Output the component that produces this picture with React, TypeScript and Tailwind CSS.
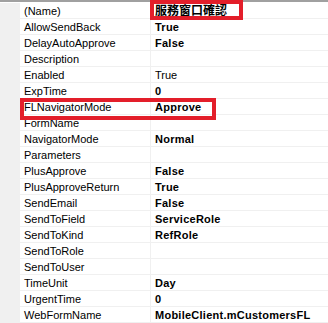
import React from "react";

type Prop = { name: string; value?: string; bold?: boolean };

const props: Prop[] = [
  { name: "(Name)", value: "服務窗口確認", bold: true },
  { name: "AllowSendBack", value: "True", bold: true },
  { name: "DelayAutoApprove", value: "False", bold: true },
  { name: "Description" },
  { name: "Enabled", value: "True" },
  { name: "ExpTime", value: "0", bold: true },
  { name: "FLNavigatorMode", value: "Approve", bold: true },
  { name: "FormName" },
  { name: "NavigatorMode", value: "Normal", bold: true },
  { name: "Parameters" },
  { name: "PlusApprove", value: "False", bold: true },
  { name: "PlusApproveReturn", value: "True", bold: true },
  { name: "SendEmail", value: "False", bold: true },
  { name: "SendToField", value: "ServiceRole", bold: true },
  { name: "SendToKind", value: "RefRole", bold: true },
  { name: "SendToRole" },
  { name: "SendToUser" },
  { name: "TimeUnit", value: "Day", bold: true },
  { name: "UrgentTime", value: "0", bold: true },
  { name: "WebFormName", value: "MobileClient.mCustomersFL", bold: true },
];

export default function App() {
  return (
    <div
      className="relative w-[328px] h-[323px] overflow-hidden bg-white text-[11px] text-black"
      style={{ fontFamily: '"Liberation Sans", "Noto Sans CJK TC", sans-serif' }}
    >
      <div className="h-[3px] border-t-2 border-[#a0a0a0] bg-white" />
      {props.map((p, i) => (
        <div key={i} className="flex h-[16px] border-b border-[#f0f0f0]">
          <div className="w-[20px] shrink-0 bg-[#f0f0f0]" />
          <div className="w-[131px] shrink-0 pl-[4px] pt-[1px] leading-[14px] whitespace-nowrap border-r border-[#f0f0f0]">
            {p.name}
          </div>
          <div
            className={`flex-1 pl-[4px] pt-[1px] leading-[14px] whitespace-nowrap ${
              p.bold ? "font-bold tracking-[0.25px]" : ""
            } ${i === 0 ? "text-[12px] tracking-normal" : ""}`}
          >
            {p.value}
          </div>
        </div>
      ))}

      {/* highlight boxes */}
      <div className="absolute left-[150px] top-0 w-[93px] h-[20px] border-4 border-[#e31e2a]" />
      <div className="absolute left-[20px] top-[98px] w-[196px] h-[22px] border-4 border-[#e31e2a]" />
    </div>
  );
}
